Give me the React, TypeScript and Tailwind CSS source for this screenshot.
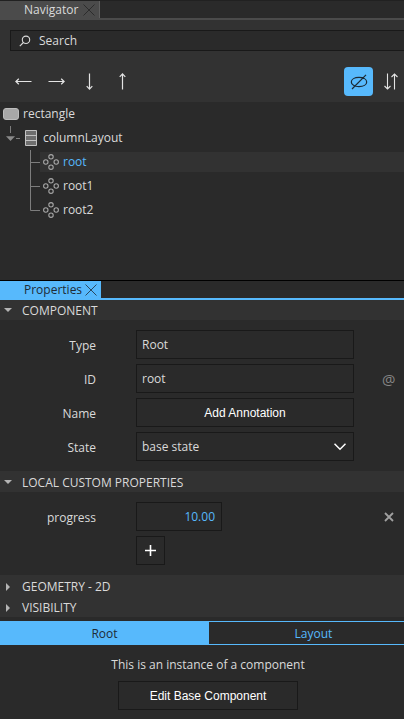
import { ReactNode } from "react";

const box = "h-[29px] border border-[#191919] bg-[#2a2a2a]";

function CloseIcon({ className }: { className: string }) {
  return (
    <svg viewBox="0 0 12 12" className={`size-3 ${className}`} fill="none" stroke="currentColor" strokeWidth="0.8">
      <path d="M0.5 0.5 11.5 11.5M11.5 0.5 0.5 11.5" />
    </svg>
  );
}

function ArrowIcon({ turn }: { turn: string }) {
  return (
    <svg viewBox="0 0 17 17" className={`size-[17px] ${turn}`} fill="none" stroke="currentColor" strokeWidth="1.2">
      <path d="M0.8 8.5H16.5M3.8 5.7 0.9 8.5l2.9 2.8" />
    </svg>
  );
}

function ComponentIcon() {
  return (
    <svg viewBox="0 0 16 16" className="size-4" fill="none" stroke="#a6a6a6" strokeWidth="1.1">
      <circle cx="8" cy="2.8" r="2.2" />
      <circle cx="8" cy="13.2" r="2.2" />
      <circle cx="2.8" cy="8" r="2.2" />
      <circle cx="13.2" cy="8" r="2.2" />
    </svg>
  );
}

function LayoutIcon() {
  return (
    <svg viewBox="0 0 12 16" className="h-4 w-3" fill="#6e6e6e" stroke="#c2c2c2" strokeWidth="1">
      <path d="M0.5 0.5h11v15h-11zM0.5 5.5h11M0.5 10.5h11" />
    </svg>
  );
}

function Branch({ last }: { last?: boolean }) {
  return (
    <svg viewBox="0 0 10 24" className="h-6 w-2.5 shrink-0" fill="none" stroke="#7d7d7d" strokeWidth="1">
      <path d={last ? "M0.5 0V12.5H10" : "M0.5 0V24M0.5 12.5H10"} />
    </svg>
  );
}

function Section({ title, open, size = "h-[21px]" }: { title: string; open?: boolean; size?: string }) {
  return (
    <button type="button" aria-expanded={!!open} className={`flex w-full items-center bg-[#323232] pt-0.5 pl-1 text-left ${size}`}>
      <svg viewBox="0 0 8 8" className="mr-2.5 size-2 shrink-0" fill="#b4b4b4">
        <path d={open ? "M0 1h8L4 5z" : "M2 0v8l4-4z"} />
      </svg>
      {title}
    </button>
  );
}

function Row({ label, id, children, action }: { label: string; id: string; children: ReactNode; action?: ReactNode }) {
  return (
    <div className="flex items-center">
      <label htmlFor={id} className="w-24 shrink-0 pt-0.5 text-right">
        {label}
      </label>
      <div className="flex min-w-0 flex-1 pl-10">{children}</div>
      <div className="flex w-16 shrink-0 pl-7">{action}</div>
    </div>
  );
}

function TreeItem({ name, selected, last }: { name: string; selected?: boolean; last?: boolean }) {
  return (
    <li className="flex h-6 items-center pl-[30px]">
      <Branch last={last} />
      <div className={`flex h-5 flex-1 items-center gap-1 pl-[3px] ${selected ? "bg-[#323232] text-[#57b9fc]" : ""}`}>
        <ComponentIcon />
        {name}
      </div>
    </li>
  );
}

export default function App() {
  return (
    <main className="min-h-screen overflow-hidden bg-[#2a2a2a] font-['Open_Sans','Noto_Sans',sans-serif] text-[12px] leading-4 text-[#dadada]">
      <section aria-label="Navigator">
        <div className="h-5 border-t border-b-2 border-t-[#212121] border-b-[#4b4b4b]">
          <div className="flex h-[17px] w-[100px] items-center justify-between border-r border-[#606060] bg-[#4b4b4b] pr-1 pl-6">
            <span>Navigator</span>
            <button type="button" aria-label="Close Navigator">
              <CloseIcon className="text-[#242424]" />
            </button>
          </div>
        </div>
        <div className="h-[82px] bg-[#323232] pt-2.5 pl-2.5">
          <label className="flex h-[21px] items-center gap-2 border border-r-0 border-[#191919] bg-[#2a2a2a] pl-2">
            <svg viewBox="0 0 12 12" className="size-3" fill="none" stroke="#dadada" strokeWidth="1.1">
              <circle cx="7" cy="4.8" r="3.7" />
              <path d="M4.4 7.5 0.8 11.2" />
            </svg>
            <input
              type="text"
              aria-label="Search"
              placeholder="Search"
              className="min-w-0 flex-1 bg-transparent outline-none placeholder:text-[#dadada]"
            />
          </label>
          <div className="mt-4 flex h-[29px] items-center pr-[5px] pl-[5px]">
            <div className="flex gap-4 text-[#e4e4e4]">
              <button type="button" aria-label="Left"><ArrowIcon turn="" /></button>
              <button type="button" aria-label="Right"><ArrowIcon turn="rotate-180" /></button>
              <button type="button" aria-label="Down"><ArrowIcon turn="-rotate-90" /></button>
              <button type="button" aria-label="Up"><ArrowIcon turn="rotate-90" /></button>
            </div>
            <button type="button" aria-label="Show invisible" className="mr-2.5 ml-auto flex size-[29px] items-center justify-center rounded bg-[#57b9fc]">
              <svg viewBox="0 0 18 16" className="h-4 w-[18px]" fill="none" stroke="#1c2a35" strokeWidth="1.2">
                <path d="M1.3 8C1.3 5.2 4.6 3.4 9 3.4s7.7 1.8 7.7 4.6-3.3 4.6-7.7 4.6S1.3 10.8 1.3 8zM2 15 16 0.8" />
              </svg>
            </button>
            <button type="button" aria-label="Reverse order">
              <svg viewBox="0 0 16 17" className="h-[17px] w-4" fill="none" stroke="#e4e4e4" strokeWidth="1.1">
                <path d="M4.5 0.5V16M1.5 13 4.5 16 7.5 13M11.5 16.5V1M8.5 4 11.5 1 14.5 4" />
              </svg>
            </button>
          </div>
        </div>
        <ul className="h-[178px]">
          <li className="flex h-6 items-center gap-1 pl-[3px]">
            <span className="h-3 w-4 rounded-[3px] border border-[#bdbdbd] bg-[#a8a8a8]" />
            rectangle
          </li>
          <li className="flex h-6 items-center pl-1.5">
            <svg viewBox="0 0 14 24" className="mr-[5px] h-6 w-3.5" fill="none" stroke="#7d7d7d">
              <path d="M4.5 0V7M10 12.5H14" />
              <path d="M0 10.2h9l-4.5 4.8z" fill="#8a8a8a" stroke="none" />
            </svg>
            <LayoutIcon />
            <span className="ml-1.5">columnLayout</span>
          </li>
          <TreeItem name="root" selected />
          <TreeItem name="root1" />
          <TreeItem name="root2" last />
        </ul>
      </section>

      <section aria-label="Properties" className="-mr-3.5 border-t border-black">
        <div className="h-[19px] border-b-2 border-[#57b9fc]">
          <div className="flex h-[17px] w-[101px] items-center justify-between bg-[#57b9fc] pr-1 pl-6 text-[#1e2b36]">
            <span>Properties</span>
            <button type="button" aria-label="Close Properties">
              <CloseIcon className="text-[#1e2b36]" />
            </button>
          </div>
        </div>
        <Section title="COMPONENT" open size="h-5" />
        <div className="flex flex-col gap-[5px] pt-2.5 pb-2.5">
          <Row label="Type" id="type">
            <input id="type" defaultValue="Root" className={`${box} w-full px-[5px] outline-none`} />
          </Row>
          <Row
            label="ID"
            id="ident"
            action={<button type="button" aria-label="Export as alias" className="text-[15px] text-[#858585]">@</button>}
          >
            <input id="ident" defaultValue="root" className={`${box} w-full px-[5px] outline-none`} />
          </Row>
          <Row label="Name" id="name">
            <button id="name" type="button" className={`${box} w-full font-['Liberation_Sans',sans-serif] text-white`}>
              Add Annotation
            </button>
          </Row>
          <Row label="State" id="state">
            <div className="relative w-full">
              <select id="state" className={`${box} block w-full appearance-none px-[5px] outline-none`}>
                <option>base state</option>
              </select>
              <svg viewBox="0 0 12 8" className="pointer-events-none absolute top-[11px] right-2 h-2 w-3" fill="none" stroke="#fff" strokeWidth="1.5">
                <path d="M0.5 0.8 6 6.3l5.5-5.5" />
              </svg>
            </div>
          </Row>
        </div>
        <Section title="LOCAL CUSTOM PROPERTIES" open />
        <div className="flex flex-col gap-[5px] py-2.5">
          <Row
            label="progress"
            id="progress"
            action={
              <button type="button" aria-label="Remove progress" className="ml-0.5 text-[#a0a0a0]">
                <svg viewBox="0 0 10 10" className="size-2.5" fill="none" stroke="currentColor" strokeWidth="1.8">
                  <path d="M1 1 9 9M9 1 1 9" />
                </svg>
              </button>
            }
          >
            <input id="progress" defaultValue="10.00" className={`${box} w-[86px] px-1.5 text-right text-[#57b9fc] outline-none`} />
          </Row>
          <button type="button" aria-label="Add property" className={`${box} ml-[136px] flex w-[29px] items-center justify-center`}>
            <svg viewBox="0 0 11 11" className="size-[11px]" fill="none" stroke="#fff" strokeWidth="1.6">
              <path d="M5.5 0V11M0 5.5H11" />
            </svg>
          </button>
        </div>
        <Section title="GEOMETRY - 2D" />
        <Section title="VISIBILITY" />
        <div role="tablist" className="mt-1 grid h-6 grid-cols-2 border-y border-[#57b9fc]">
          <button type="button" role="tab" aria-selected="true" className="bg-[#57b9fc] pt-0.5 text-[#1e2b36]">Root</button>
          <button type="button" role="tab" aria-selected="false" className="pt-0.5 text-[#57b9fc]">Layout</button>
        </div>
        <div className="flex flex-col items-center gap-2 pt-3 pr-0.5 pb-[9px]">
          <p>This is an instance of a component</p>
          <button type="button" className={`${box} px-[31px] font-['Liberation_Sans',sans-serif] text-white`}>
            Edit Base Component
          </button>
        </div>
      </section>
    </main>
  );
}
